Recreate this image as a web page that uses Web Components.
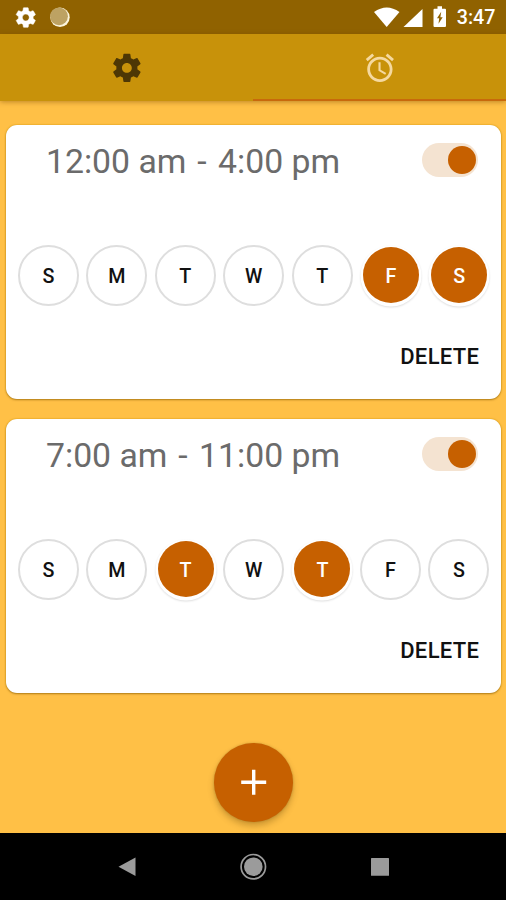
<!DOCTYPE html>
<html lang="en">
<head>
<meta charset="utf-8">
<title>Schedules</title>
<style>
html,body{margin:0;height:100%}
body{font-family:Roboto,"Liberation Sans",sans-serif;background:#ffc046;overflow:hidden}
</style>
</head>
<body>
<alarm-app></alarm-app>
<script>
const GEAR = 'M19.43 12.98c.04-.32.07-.64.07-.98s-.03-.66-.07-.98l2.11-1.65c.19-.15.24-.42.12-.64l-2-3.46c-.12-.22-.39-.3-.61-.22l-2.49 1c-.52-.4-1.08-.73-1.69-.98l-.38-2.65C14.46 2.18 14.25 2 14 2h-4c-.25 0-.46.18-.49.42l-.38 2.65c-.61.25-1.17.59-1.69.98l-2.49-1c-.23-.09-.49 0-.61.22l-2 3.46c-.13.22-.07.49.12.64l2.11 1.65c-.04.32-.07.65-.07.98s.03.66.07.98l-2.11 1.65c-.19.15-.24.42-.12.64l2 3.46c.12.22.39.3.61.22l2.49-1c.52.4 1.08.73 1.69.98l.38 2.65c.03.24.24.42.49.42h4c.25 0 .46-.18.49-.42l.38-2.65c.61-.25 1.17-.59 1.69-.98l2.49 1c.23.09.49 0 .61-.22l2-3.46c.12-.22.07-.49-.12-.64l-2.11-1.65zM12 15.5c-1.93 0-3.5-1.57-3.5-3.5s1.57-3.5 3.5-3.5 3.5 1.57 3.5 3.5-1.57 3.5-3.5 3.5z';
const ALARM = 'M22 5.72l-4.6-3.86-1.29 1.53 4.6 3.86L22 5.72zM7.88 3.39L6.6 1.86 2 5.71l1.29 1.53 4.59-3.85zM12.5 8H11v6l4.75 2.85.75-1.23-4-2.37V8zM12 4c-4.97 0-9 4.03-9 9s4.02 9 9 9c4.97 0 9-4.03 9-9s-4.03-9-9-9zm0 16c-3.87 0-7-3.13-7-7s3.13-7 7-7 7 3.13 7 7-3.13 7-7 7z';

const define = (name, html) => customElements.define(name, class extends HTMLElement {
  constructor() {
    super();
    this.attachShadow({mode: 'open'}).innerHTML = typeof html === 'function' ? html(this) : html;
  }
});

define('status-bar', `
<style>
:host{display:flex;align-items:center;justify-content:space-between;box-sizing:border-box;height:33.75px;padding:0 10.5px 0 14px;background:#906200;color:#fff}
.g{display:flex;align-items:center}
svg{display:block;flex:none}
.time{font-size:19.7px;font-weight:500;line-height:24px;margin:3px 0 0 11px}
</style>
<div class="g">
  <svg width="23.6" height="34" viewBox="0 -5.2 24 34.5"><path transform="translate(0 .6)" d="${GEAR}" fill="#fff" stroke="#fff" stroke-width=".5"/></svg>
  <svg width="24" height="34" style="margin-left:10px" viewBox="0 0 24 34"><circle cx="12" cy="17.3" r="9.7" fill="#fbf4dc"/><circle cx="11" cy="16.3" r="8.9" fill="#bda263"/></svg>
</div>
<div class="g">
  <svg width="72" height="34" viewBox="0 0 72 34" fill="#fff">
    <path d="M0 12Q12.7 2.8 25.5 12L12.7 27Z"/>
    <path d="M48.5 9V27H29.5Z"/>
    <path fill-rule="evenodd" d="M63.5 6.3h4.5v2.4h3q1 0 1 1V26q0 1-1 1H60.5q-1 0-1-1V9.7q0-1 1-1h3zM67.2 11.8L63 18.2h2.2L64.500 23.800l4.200-6.600h-2.300z"/>
  </svg>
  <span class="time">3:47</span>
</div>`);

define('tab-item', el => `
<style>
:host{flex:1;display:flex;align-items:center;justify-content:center;box-sizing:border-box;border-bottom:2.8px solid transparent;color:#4d3705}
:host([active]){color:#f5d9a0;border-color:#c8690c}
svg{display:block;width:33.75px;height:33.75px;margin-top:2.5px}
</style>
<svg viewBox="0 0 24 24"><path fill="currentColor" d="${el.getAttribute('icon') === 'alarm' ? ALARM : GEAR}"/></svg>`);

define('tab-bar', `
<style>:host{display:flex;height:67.5px;background:#c8920a;box-shadow:0 1px 5px rgba(110,65,0,.45)}</style>
<slot></slot>`);

define('toggle-switch', `
<style>
:host{display:flex;align-items:center;justify-content:flex-end;box-sizing:border-box;width:56px;height:34px;padding-right:2.5px;border-radius:17px;background:#f4e3d1}
i{display:block;width:28px;height:28px;border-radius:50%;background:#c66000}
</style><i></i>`);

define('day-chip', `
<style>
:host{display:flex;align-items:center;justify-content:center;box-sizing:border-box;width:61px;height:61px;border:2.4px solid #dedede;border-radius:50%;font-size:19.7px;font-weight:500;line-height:24px;color:#111;padding-top:2px}
:host([on]){width:56px;height:56px;margin:0 2.2px 1px 2.8px;border:0;background:#c66000;color:#fff;padding-top:3px;box-shadow:0 1px 0 2.5px #fff,0 2px 2px 2.5px rgba(0,0,0,.13)}
</style><slot></slot>`);

define('schedule-card', `
<style>
:host{display:flex;flex-direction:column;box-sizing:border-box;height:273.3px;border-radius:11px;background:#fff;box-shadow:0 1px 2px rgba(110,70,0,.5),0 0 2px #d99d08}
header{display:flex;align-items:center;justify-content:space-between;height:69px;padding:0 23px 0 40px}
.time{font-size:33.75px;line-height:40px;color:#6b6b6b;margin-top:4px;white-space:nowrap}
.days{display:flex;align-items:center;justify-content:space-between;height:61px;padding:0 12px;margin-top:50.7px}
footer{display:flex;justify-content:flex-end;padding:38px 22px 0 0}
button{all:unset;font-size:22px;font-weight:500;line-height:26px;letter-spacing:.35px;color:#111}
</style>
<header><div class="time"><slot name="time"></slot></div><toggle-switch></toggle-switch></header>
<div class="days"><slot></slot></div>
<footer><button>DELETE</button></footer>`);

define('add-button', `
<style>
:host{display:flex;align-items:center;justify-content:center;width:78.75px;height:78.75px;border-radius:50%;background:#c66000;box-shadow:0 4px 6px rgba(90,55,0,.3),0 0 2px rgba(90,55,0,.3)}
svg{display:block}
</style>
<svg width="26" height="26" viewBox="0 0 26 26"><path d="M12.7 .8v25M.2 13.3h25" stroke="#fff" stroke-width="3.4"/></svg>`);

define('nav-bar', `
<style>
:host{display:grid;grid-template-columns:repeat(3,126.5px);justify-content:center;place-items:center;box-sizing:border-box;height:67.3px;padding-top:1px;background:#000}
svg{display:block}
</style>
<svg width="28" height="28" viewBox="0 0 28 28"><path d="M22.5 4.5V23L5.5 13.7Z" fill="#9b9b9b"/></svg>
<svg width="28" height="28" viewBox="0 0 28 28"><circle cx="14.3" cy="13.7" r="12.2" fill="none" stroke="#9b9b9b" stroke-width="1.7"/><circle cx="14.3" cy="13.7" r="9.3" fill="#9b9b9b"/></svg>
<svg width="28" height="28" viewBox="0 0 28 28"><rect x="5" y="5" width="18" height="17.7" rx=".5" fill="#9b9b9b"/></svg>`);

define('alarm-app', `
<style>
:host{display:flex;flex-direction:column;height:900px;width:506px}
main{flex:1;display:flex;flex-direction:column;align-items:stretch;gap:20.7px;padding:24.2px 4.6px 0 6px}
add-button{align-self:center;margin:29.5px 0 0 -.4px}
.dash{display:inline-block;margin:0 3.2px 0 2.4px}
</style>
<status-bar></status-bar>
<tab-bar><tab-item icon="settings"></tab-item><tab-item icon="alarm" active></tab-item></tab-bar>
<main>
  <schedule-card><span slot="time">12:00 am <span class="dash">-</span> 4:00 pm</span>
    <day-chip>S</day-chip><day-chip>M</day-chip><day-chip>T</day-chip><day-chip>W</day-chip><day-chip>T</day-chip><day-chip on>F</day-chip><day-chip on>S</day-chip>
  </schedule-card>
  <schedule-card><span slot="time">7:00 am <span class="dash">-</span> 11:00 pm</span>
    <day-chip>S</day-chip><day-chip>M</day-chip><day-chip on>T</day-chip><day-chip>W</day-chip><day-chip on>T</day-chip><day-chip>F</day-chip><day-chip>S</day-chip>
  </schedule-card>
  <add-button></add-button>
</main>
<nav-bar></nav-bar>`);
</script>
</body>
</html>
